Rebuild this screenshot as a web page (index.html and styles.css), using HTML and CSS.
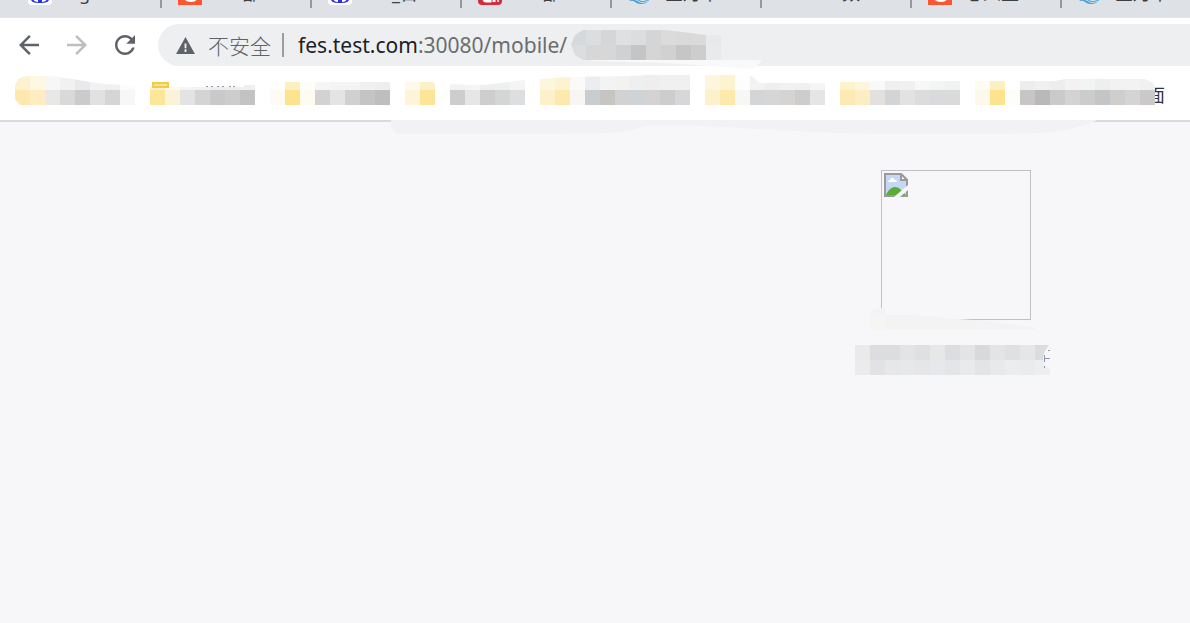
FILE: index.html
```html
<!DOCTYPE html>
<html lang="zh-CN">
<head>
    <meta charset="UTF-8">
    <meta name="viewport" content="width=device-width, initial-scale=1.0">
    <title>fes.test.com</title>
    <link rel="stylesheet" href="styles.css">
</head>
<body>

    <!-- Shared icons -->
    <svg class="sprite" aria-hidden="true">
        <symbol id="icon-baidu" viewBox="0 0 24 24">
            <rect width="24" height="24" rx="4" fill="#fff"/>
            <path d="M12 10c-4 0-9 4-9 8 0 3 3 4 9 4s9-1 9-4c0-4-5-8-9-8z" fill="#2932e1"/>
            <path d="M6 18q1 2 4 2M18 18q-1 2-4 2M12 16v3" fill="none" stroke="#fff" stroke-width="2"/>
        </symbol>
        <symbol id="icon-orange" viewBox="0 0 24 24">
            <rect width="24" height="24" fill="#fc5531"/>
            <path d="M6 18q2 3 7 3t6-3" fill="#fff"/>
            <path d="M6 14h13v4H6z" fill="#fff"/>
        </symbol>
        <symbol id="icon-red" viewBox="0 0 24 24">
            <rect width="24" height="24" rx="4" fill="#d22f3d"/>
            <path d="M12 14H6q-1 6 2 6h4zM16 12v9" fill="none" stroke="#fff" stroke-width="3"/>
            <circle cx="20" cy="20" r="1" fill="#fff"/>
        </symbol>
        <symbol id="icon-wave" viewBox="0 0 24 24">
            <path d="M1 20q5-4 10-1t11-2q-2 6-9 6-4 0-6-2t-6-1z" fill="#4d9fd0"/>
            <path d="M5 18q4 1 7 3t8-1" fill="none" stroke="#c6e2f2"/>
        </symbol>
    </svg>

    <header class="browser">
        <nav class="tabs">
            <a class="tab" href="#"><svg class="favicon"><use href="#icon-baidu"/></svg><span class="tab-title indent">g</span></a>
            <a class="tab" href="#"><svg class="favicon"><use href="#icon-orange"/></svg><span class="tab-title indent">部</span></a>
            <a class="tab" href="#"><svg class="favicon"><use href="#icon-baidu"/></svg><span class="tab-title indent">_百</span></a>
            <a class="tab" href="#"><svg class="favicon"><use href="#icon-red"/></svg><span class="tab-title indent">部</span></a>
            <a class="tab" href="#"><svg class="favicon"><use href="#icon-wave"/></svg><span class="tab-title">查月中</span></a>
            <a class="tab" href="#"><svg class="favicon"></svg><span class="tab-title indent">数</span></a>
            <a class="tab" href="#"><svg class="favicon"><use href="#icon-orange"/></svg><span class="tab-title">心人生</span></a>
            <a class="tab" href="#"><svg class="favicon"><use href="#icon-wave"/></svg><span class="tab-title">查月中</span></a>
        </nav>

        <div class="toolbar">
            <button type="button" class="nav-btn" aria-label="后退">
                <svg viewBox="0 0 24 24"><path d="M20 11H7.830l5.590-5.590L12 4l-8 8 8 8 1.410-1.410L7.830 13H20v-2z"/></svg>
            </button>
            <button type="button" class="nav-btn disabled" aria-label="前进" disabled>
                <svg viewBox="0 0 24 24"><path d="M4 11h12.170l-5.590-5.590L12 4l8 8-8 8-1.410-1.410L16.170 13H4v-2z"/></svg>
            </button>
            <button type="button" class="nav-btn" aria-label="重新加载">
                <svg viewBox="0 0 24 24"><path d="M17.650 6.350C16.200 4.900 14.210 4 12 4c-4.420 0-7.990 3.580-7.990 8s3.570 8 7.990 8c3.730 0 6.840-2.550 7.730-6h-2.080c-.82 2.330-3.040 4-5.650 4-3.310 0-6-2.690-6-6s2.690-6 6-6c1.660 0 3.140.69 4.220 1.780L13 11h7V4l-2.350 2.350z"/></svg>
            </button>
            <div class="omnibox">
                <button type="button" class="security">
                    <svg viewBox="0 0 20 18"><path d="M10 0L20 18H0zM9 7v5h2V7zM9 13v3h2v-3z" fill-rule="evenodd"/></svg>
                    <span>不安全</span>
                </button>
                <div class="url" role="textbox" aria-label="地址" contenteditable="true" spellcheck="false"><span class="host">fes.test.com</span>:30080/mobile/</div>
                <svg class="mosaic" data-mosaic="url"></svg>
                <svg class="smear-url" viewBox="0 0 172 9"><path d="M0 0H172L167 6Q160 10 148 8L75 3 6 1z"/></svg>
            </div>
        </div>

        <nav class="bookmarks">
            <a href="#" aria-label="书签 1"><svg class="mosaic" data-mosaic="mark1"></svg></a>
            <a href="#" aria-label="书签 2"><svg class="mosaic" data-mosaic="mark2"></svg></a>
            <a href="#" aria-label="书签 3"><svg class="mosaic" data-mosaic="mark3"></svg></a>
            <a href="#" aria-label="书签 4"><svg class="mosaic" data-mosaic="mark4"></svg></a>
            <a href="#" aria-label="书签 5"><svg class="mosaic" data-mosaic="mark5"></svg></a>
            <a href="#" aria-label="书签 6"><svg class="mosaic" data-mosaic="mark6"></svg></a>
            <a href="#" aria-label="书签 7"><svg class="mosaic" data-mosaic="mark7"></svg></a>
            <a href="#" aria-label="书签 8"><svg class="mosaic" data-mosaic="mark8"></svg><span class="mark-end">面</span></a>
        </nav>
        <svg class="smear-bar" viewBox="0 0 706 15"><path d="M0 0H706Q690 8 660 12Q640 14 600 14H485Q430 13 350 8Q290 4 252 6Q240 13 210 13Q190 14 100 14H6Q0 10 0 0z"/></svg>
    </header>

    <main class="page">
        <div class="card">
            <div class="picture" role="img" aria-label="图片加载失败">
                <svg class="broken" viewBox="0 0 24 24">
                    <path d="M1 1h16l6 6v16H1z" fill="#c5d7f5" stroke="#9a9a9a" stroke-width="2"/>
                    <path d="M4 9q0-2 2-2 1-3 3-2t2 2q2 0 2 2z" fill="#fff"/>
                    <path d="M2 22q3-7 8-8 5 0 7 3l5 5z" fill="#59ad35"/>
                    <path d="M17 1v6h6z" fill="#fff" stroke="#9a9a9a" stroke-width="2"/>
                    <path d="M10 24L24 12v5l-8 7z" fill="#f7f7fa"/>
                </svg>
                <svg class="smear-picture" viewBox="0 0 165 22">
                    <path d="M0 22V3L8 0h7v7l31 0 42 4 30 2 47 7v2z" fill="#f3f3f4"/>
                    <path d="M0 7h15v15H0z" fill="#f5f5f4"/>
                </svg>
            </div>
            <div class="caption">
                <svg class="mosaic" data-mosaic="caption"></svg>
            </div>
        </div>
    </main>

    <script src="script.js"></script>
</body>
</html>
```

FILE: styles.css
```css
* {
    box-sizing: border-box;
}

body {
    margin: 0;
    min-height: 100vh;
    background-color: #f7f7fa;
    color: #5f6368;
    font-family: "Noto Sans", "Noto Sans CJK SC", sans-serif;
}

a {
    color: inherit;
    text-decoration: none;
}

svg {
    display: block;
    flex: none;
}

.sprite {
    position: absolute;
    width: 0;
    height: 0;
}

.browser {
    position: relative;
    background-color: #fff;
    border-bottom: 2px solid #dadadd;
}

/* Tab strip, only its lower edge is visible */
.tabs {
    display: flex;
    align-items: flex-end;
    height: 18px;
    padding-left: 12px;
    overflow: hidden;
    background-color: #dee1e6;
}

.tab {
    display: flex;
    flex: none;
    align-items: center;
    width: 150px;
    height: 50px;
    padding-left: 16px;
    color: #3c4043;
    font-size: 18px;
    line-height: 24px;
}

.tab::after {
    content: "";
    width: 2px;
    height: 30px;
    margin-left: auto;
    background-color: #95989d;
}

.favicon {
    width: 24px;
    height: 24px;
    margin-right: 13px;
}

.tab-title.indent {
    padding-left: 27px;
}

.tab:first-child .indent {
    padding-left: 14px;
}

/* Toolbar */
.toolbar {
    display: flex;
    align-items: center;
    padding: 6px 0 6px 5px;
}

.nav-btn {
    display: flex;
    justify-content: center;
    width: 48px;
    padding: 0;
    border: none;
    background: none;
    fill: #5f6368;
    cursor: pointer;
}

.nav-btn svg {
    width: 30px;
    height: 30px;
}

.nav-btn.disabled {
    fill: #bcbec1;
    cursor: default;
}

.omnibox {
    position: relative;
    display: flex;
    flex: 1;
    align-items: center;
    height: 42px;
    margin-left: 9px;
    padding-left: 18px;
    border-radius: 21px 0 0 21px;
    background-color: #eeeff1;
}

.security {
    display: flex;
    align-items: center;
    gap: 13px;
    height: 24px;
    padding: 0 11px 0 0;
    border: none;
    border-right: 2px solid #9b9da1;
    background: none;
    color: #5f6368;
    font-family: "Noto Sans CJK SC", sans-serif;
    font-size: 21px;
    font-weight: 300;
    line-height: 24px;
    cursor: pointer;
}

.security svg {
    width: 19px;
    height: 17px;
    fill: #5f6368;
}

.url {
    margin: 0 4px 0 14px;
    color: #6b6d70;
    font-family: "Noto Sans", "Open Sans", sans-serif;
    font-size: 21px;
    line-height: 30px;
    white-space: nowrap;
    outline: none;
}

.host {
    color: #202124;
}

.smear-url {
    position: absolute;
    top: 36px;
    left: 432px;
    width: 172px;
    height: 9px;
    fill: #f8f9f9;
}

/* Bookmarks bar */
.bookmarks {
    display: flex;
    gap: 15px;
    height: 48px;
    padding: 3px 15px 0;
}

.bookmarks a {
    display: flex;
    flex: none;
}

.mark-end {
    display: flex;
    justify-content: flex-end;
    width: 10px;
    overflow: hidden;
    color: #30343c;
    font-size: 18px;
    line-height: 40px;
}

.smear-bar {
    position: absolute;
    top: 120px;
    left: 391px;
    width: 706px;
    height: 15px;
    fill: #f2f2f4;
}

/* Page */
.page {
    display: flex;
    justify-content: flex-end;
    padding: 48px 133px 48px 0;
}

.card {
    display: flex;
    flex-direction: column;
    align-items: center;
    gap: 25px;
    width: 202px;
}

.picture {
    position: relative;
    width: 150px;
    height: 150px;
    padding: 2px;
    border: 1px solid #c0c0c0;
}

.broken {
    width: 24px;
    height: 24px;
}

.smear-picture {
    position: absolute;
    bottom: -11px;
    left: -12px;
    width: 165px;
    height: 22px;
}

.caption {
    align-self: flex-start;
}
```

FILE: script.js
```javascript
// Blurred-out texts: two rows of 15px cells cut to an outline
const CELL = 15;

const mosaics = {
    url: {
        top: '#d6d9db #dcdddf #d6d6d6 #dfe0e1 #dcdddd #d3d5d6 #dbdbdc #d9d9da #dadadb #e7e9eb',
        bottom: '#dcdddf #d7d7d8 #d7d7d8 #d0d1d2 #c5c5c7 #d5d5d6 #d1d1d2 #c6c6c7 #cdcdce #e9eaec',
        outline: '0,15 4,5 12,0 95,0 135,5 150,5 150,30 12,30 4,25'
    },
    mark1: {
        top: '#fdf2cd #fef7e1 #f7f7f7 #f0f1f0 #e9e9eb #f2f2f3 #f0f0f0 #fbfcfb',
        bottom: '#fde9b0 #fdedc0 #e8e8e6 #dad9d8 #cacbcd #e1e1e1 #d5d5d6 #f6f7f7',
        outline: '0,11 3,4 8,2 14,1 35,1 58,4 75,7 90,9 120,11 120,30 5,30 0,24'
    },
    mark2: {
        top: '#fdf1c6 #fdf9eb #f4f4f4 #f1f1f1 #eeeeee #eeeeee #efefef',
        bottom: '#fce69a #fbf3d9 #e3e3e3 #d4d4d4 #c9c9c9 #cdcdcd #c3c3c3',
        outline: '0,12 2,12 2,7 19,7 19,12 94,12 94,10 105,10 105,30 0,30',
        accent: [3, 8, 15, 4],
        stroke: 'M56 11.500h2M61 11.500h2M67 11.500h2M72 11.500h2M79 11.500h2M83 11.500h2'
    },
    mark3: {
        top: '#fffdf8 #fdefc0 #fefef9 #f6f6f4 #f4f4f4 #f4f4f4 #f0f0f0 #eeeeee',
        bottom: '#fefbf4 #fce48e #fefbf0 #d2d2d2 #e4e4e4 #d0d0d0 #c6c3c3 #bfbebe',
        outline: '0,8 15,7 120,7 120,30 0,30'
    },
    mark4: {
        top: '#fef9ea #fdf0c6 #ffffff #f2f2f2 #f5f5f5 #eeeeee #eef0f0 #f4f4f4',
        bottom: '#fdf4da #fce596 #fefefc #cdcdcd #e6e6e6 #cecece #d3d6d5 #dddee0',
        outline: '0,7 28,7 30,9 80,10 95,8 120,5 120,30 0,30'
    },
    mark5: {
        top: '#fdf6dc #fdf3d0 #fbf9f9 #ebedf0 #f3f3f3 #f2f3f1 #eef0f0 #eeeeee #f0f0f0 #f0f0f0',
        bottom: '#fdf1cc #fde9ae #f9f5f2 #c8cdd0 #c6c5c2 #d2d2d2 #ced3d7 #d5d2d3 #cdcdcd #d7d7d9',
        outline: '0,4 28,2 90,1 110,0 150,0 150,30 0,30'
    },
    mark6: {
        top: '#fdf6dc #fdf3d0 #fdfdfd #f2f2f2 #eeeeee #f1f1f1 #f0f0f0 #f5f5f6',
        bottom: '#fdf1cc #fde9ae #f7f7f5 #d4d5d7 #d6d6d6 #d5d4d2 #cdcdcd #e4e5e7',
        outline: '0,0 45,0 55,8 120,8 120,30 0,30'
    },
    mark7: {
        top: '#fdf2cc #fdf5dd #f9f9f9 #efefef #f0f0f0 #f6f7f7 #f3f5f4 #f1f3f2',
        bottom: '#fdeab3 #fbeec4 #e3e1df #d3d4d6 #e2e2e2 #dcdcdc #dadadc #dadada',
        outline: '0,7 25,7 35,6 120,6 120,30 0,30'
    },
    mark8: {
        top: '#fefbf0 #fdefc0 #ffffff #ededed #f0f0f0 #ededee #f3f2f0 #f1f4f3 #eeeeee #f2f2f2 #f2f2f2 #f0f0f0',
        bottom: '#fcf9ea #fbe48d #fdfdfa #c7c5c5 #b9b9b9 #cacacc #d3d3d3 #cccccc #c3c5c7 #cfcecc #d4d4d4 #cac8c8',
        outline: '0,6 80,6 90,4 170,4 178,8 180,12 180,30 0,30'
    },
    caption: {
        top: '#eaeaea #dcdddf #dcdddd #e4e4e6 #dfe0e1 #e7e7e8 #dcdde0 #e3e4e5 #d8d9da #e3e4e5 #dfe0e1 #e6e6e7 #dbdcde',
        bottom: '#ebebeb #e2e2e6 #e6e7e8 #e7e8ea #e6e6e6 #e7e8eb #e4e5e7 #e9eaeb #e2e4e5 #e8e9ea #ecedee #eaebec #edeef0',
        outline: '0,0 194,0 190,6 188,12 190,21 195,24 195,30 0,30',
        stroke: 'M189.500 10v7M189.500 21v2M189 13.500h6M193 5.500h2'
    }
};

function row(colors, y) {
    return colors.split(' ').map(function(color, i) {
        return `<rect x="${i * CELL}" y="${y}" width="${CELL}" height="${CELL}" fill="${color}"/>`;
    }).join('');
}

document.querySelectorAll('[data-mosaic]').forEach(function(svg) {
    const name = svg.dataset.mosaic;
    const m = mosaics[name];

    svg.setAttribute('width', m.top.split(' ').length * CELL);
    svg.setAttribute('height', CELL * 2);

    let content = `<clipPath id="clip-${name}"><polygon points="${m.outline}"/></clipPath>`;
    content += `<g clip-path="url(#clip-${name})">${row(m.top, 0)}${row(m.bottom, CELL)}`;
    if (m.accent) {
        const [x, y, w, h] = m.accent;
        content += `<rect x="${x}" y="${y}" width="${w}" height="${h}" fill="#fde38a" stroke="#f3cb4b" stroke-width="2"/>`;
    }
    content += '</g>';
    if (m.stroke) {
        content += `<path d="${m.stroke}" fill="none" stroke="#8f98ab"/>`;
    }
    svg.innerHTML = content;
});
```
